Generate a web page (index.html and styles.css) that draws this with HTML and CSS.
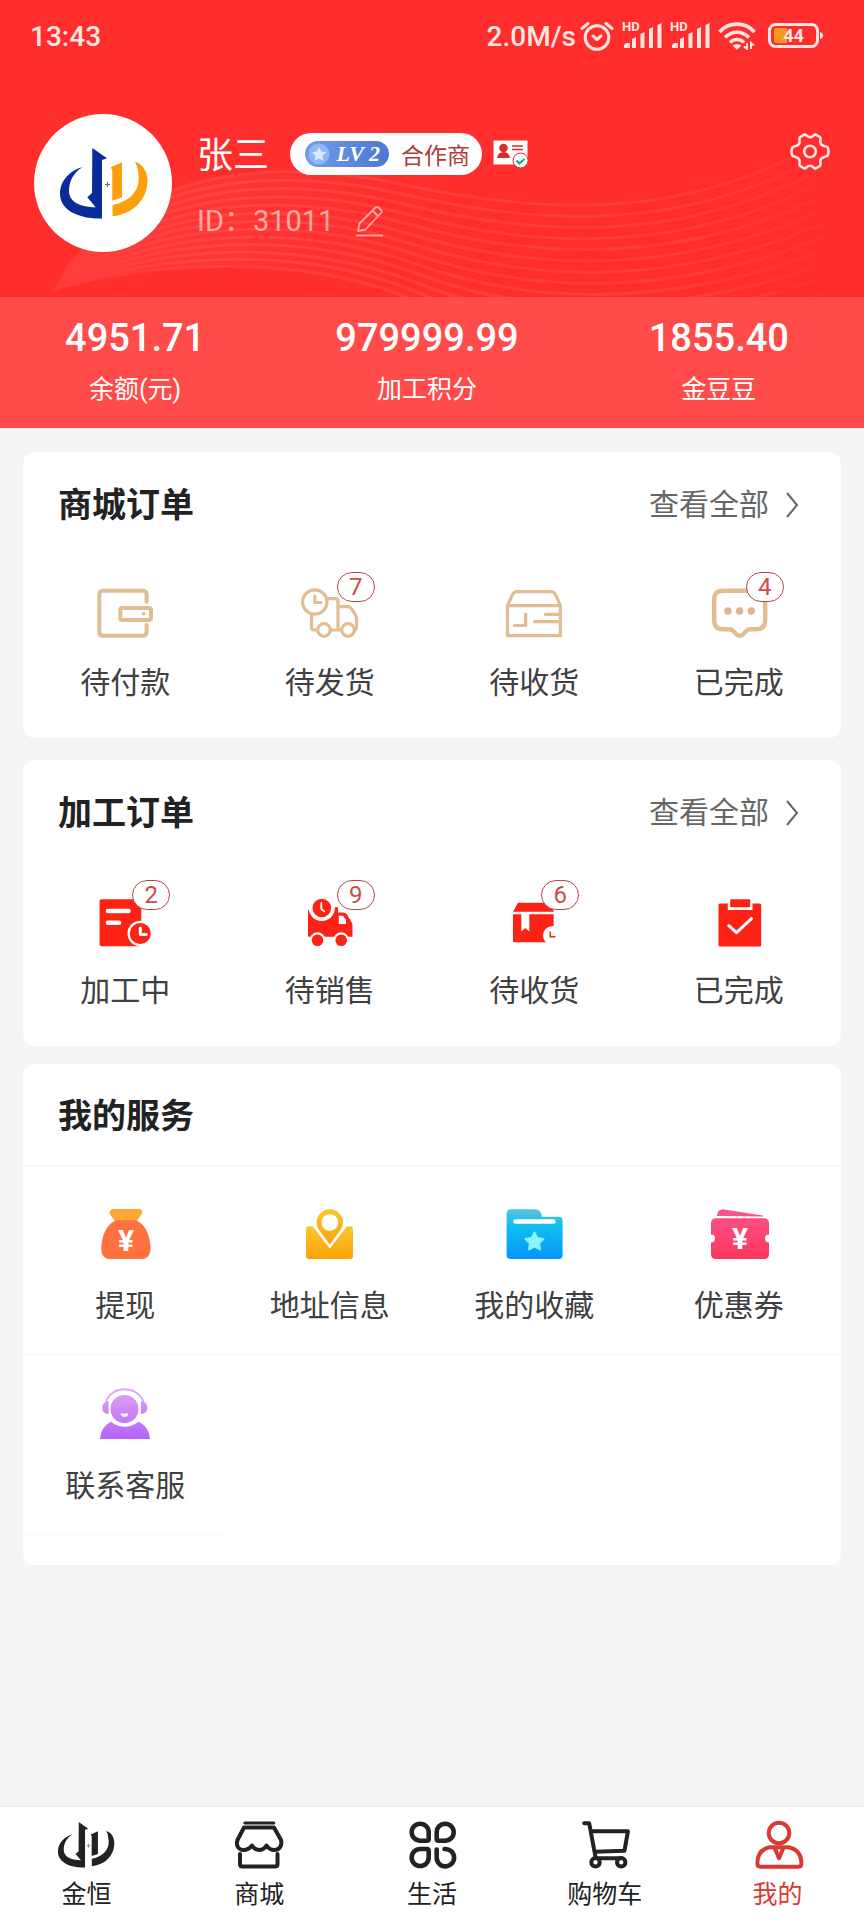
FILE: index.html
```html
<!DOCTYPE html>
<html lang="zh-CN">
<head>
<meta charset="utf-8">
<meta name="viewport" content="width=device-width, initial-scale=1">
<title>我的</title>
<link rel="stylesheet" href="styles.css">
</head>
<body>
<svg class="defs" aria-hidden="true">
  <defs>
    <symbol id="brand" viewBox="22 27 93 77">
      <g class="brand-left"><path d="M57.3 30 72 40.3 67 42V100.5C40 101 25 90 25 76 25 62 36 52 47.3 49.3 38 55 34 64 34 73c0 11 11 16 26.7 16.3L52.3 79.3 57 75Z"/></g>
      <g class="brand-right"><path d="M75.700 49.300 87 44.300V79.300L77.300 82.700V52ZM100 43.700C108 46 112.500 54 112.500 63 112 82 98 96 77.500 98.300V87C92 84 102 76 103.500 64 104 56 103 50 100 43.700Z"/></g>
      <path class="brand-mark" d="M72.500 64v5M70 66.500h5"/>
    </symbol>
    <linearGradient id="gold" x1="0" y1="0" x2="0" y2="1"><stop offset="0" stop-color="#fcc62b"/><stop offset="1" stop-color="#fba30a"/></linearGradient>
    <linearGradient id="blue" x1="0" y1="0" x2="0" y2="1"><stop offset="0" stop-color="#5cc3e0"/><stop offset=".3" stop-color="#12c1ee"/><stop offset="1" stop-color="#0894ff"/></linearGradient>
    <linearGradient id="pink" x1="0" y1="0" x2="0" y2="1"><stop offset="0" stop-color="#fb4f83"/><stop offset="1" stop-color="#fb365d"/></linearGradient>
    <linearGradient id="violet" gradientUnits="userSpaceOnUse" x1="0" y1="0" x2="0" y2="51"><stop offset="0" stop-color="#e3a5f3"/><stop offset="1" stop-color="#b562fa"/></linearGradient>
    <linearGradient id="wave-line" gradientUnits="userSpaceOnUse" x1="60" y1="0" x2="830" y2="0"><stop offset="0" stop-color="#fff" stop-opacity="0"/><stop offset=".2" stop-color="#fff" stop-opacity=".08"/><stop offset=".8" stop-color="#fff" stop-opacity=".07"/><stop offset="1" stop-color="#fff" stop-opacity=".02"/></linearGradient>
    <linearGradient id="wave-glow" gradientUnits="userSpaceOnUse" x1="52" y1="0" x2="400" y2="0"><stop offset="0" stop-color="#fff" stop-opacity=".07"/><stop offset="1" stop-color="#fff" stop-opacity="0"/></linearGradient>
  </defs>
</svg>

<header class="top">
  <svg class="waves" viewBox="0 0 864 297" preserveAspectRatio="none" aria-hidden="true">
    <path d="M52 292C110 180 250 152 400 184S690 220 828 138"/>
    <path d="M52 292C112 187 254 160 402 194S690 230 828 152"/>
    <path d="M52 292C114 194 258 168 404 204S690 240 828 166"/>
    <path d="M52 292C116 201 262 176 406 214S690 250 828 180"/>
    <path d="M52 292C118 208 266 184 408 224S690 260 828 194"/>
    <path d="M52 292C120 215 270 192 410 234S690 270 828 208"/>
    <path d="M52 292C122 222 274 200 412 244S690 280 828 222"/>
    <path d="M52 292C124 229 278 208 414 254S690 290 828 236"/>
    <path d="M52 292C126 236 282 216 416 264S690 300 828 250"/>
    <path d="M52 292C128 243 286 224 418 274S690 310 828 264"/>
    <path d="M52 292C130 250 290 232 420 284S690 320 828 278"/>
    <path d="M52 292C132 257 294 240 422 294S690 330 828 292"/>
    <path d="M52 292C134 264 298 248 424 304"/>
    <path class="wave-fill" d="M52 292C110 180 250 152 400 184L424 300C298 248 134 264 52 292Z"/>
  </svg>

  <div class="status">
    <span>13:43</span>
    <div class="status-right">
      <span>2.0M/s</span>
      <svg width="34" height="30" viewBox="0 0 34 30" fill="none" stroke="currentColor" stroke-width="3" stroke-linecap="round"><circle cx="17" cy="16.500" r="11.800"/><path d="M2 7.500 8 2.500M32 7.500 26 2.500"/><path d="m13 15 4 3.500 4-3.500" stroke-linejoin="round"/></svg>
      <svg class="signal" width="40" height="40" viewBox="0 -6 40 40" fill="currentColor"><text x="0" y="9">HD</text><path d="M2 26v-3l2-2h4v5zM10 26V17l4-2v11zM18.500 26V12l4-2v16zM27 26V7l4-2v21zM35.500 26V3l4-2v25z"/></svg>
      <svg class="signal" width="40" height="40" viewBox="0 -6 40 40" fill="currentColor"><text x="0" y="9">HD</text><path d="M2 26v-3l2-2h4v5zM10 26V17l4-2v11zM18.500 26V12l4-2v16zM27 26V7l4-2v21zM35.500 26V3l4-2v25z"/></svg>
      <svg class="wifi" width="38" height="28" viewBox="0 0 38 28" fill="none" stroke="currentColor" stroke-width="3.600"><path d="M1.500 10C11-.5 27-.5 36.500 10M7 15.500c7-7 17-7 24 0M12 20.500c4-4 10-4 14 0"/><path d="m14.500 23.500 4.500 4.200 4.500-4.200q-4.500-3-9 0Z" fill="currentColor" stroke="none"/><path d="M29 21v6l-3-2.500M33 27v-6l3 2.500" stroke-width="2"/></svg>
      <svg class="battery" width="56" height="26" viewBox="0 0 56 26"><rect x="1.500" y="1.500" width="48" height="22" rx="6" fill="none" stroke="currentColor" stroke-width="3"/><path d="M9 5h10v15H9q-3 0-3-3V8q0-3 3-3Z" fill="#f59b20"/><path d="M52 9q3 1 3 3.500T52 16Z" fill="currentColor"/><text x="25.500" y="19" text-anchor="middle" fill="currentColor">44</text></svg>
    </div>
  </div>

  <div class="profile">
    <div class="avatar"><svg width="93" height="77"><use href="#brand"/></svg></div>
    <div class="info">
      <div class="name-row">
        <h1 class="name">张三</h1>
        <div class="role">
          <span class="level">
            <svg width="24" height="24" viewBox="0 0 24 24"><circle cx="12" cy="12" r="10.500" fill="#8fb6f5"/><path d="m12 5 2.200 4.500 5 .7-3.600 3.500.8 5L12 16.400 7.600 18.700l.8-5L4.800 10.200l5-.7Z" fill="#dbe9ff"/></svg>
            <em>LV 2</em>
          </span>
          <span>合作商</span>
        </div>
        <svg width="36" height="30" viewBox="0 0 36 30"><path d="M.5 1.500h34v24h-34z" fill="#fff"/><circle cx="10.500" cy="9" r="4.300" fill="#d92b2b"/><path d="M4 19q1-6 6.500-6T17 19Z" fill="#d92b2b"/><path d="M19 7h11M19 10.500h11" stroke="#d92b2b" stroke-width="1.500"/><circle cx="27.500" cy="21.500" r="7.500" fill="#fff" stroke="#d92b2b"/><path d="m23.500 21.500 3 3 5-4.500" fill="none" stroke="#23a08c" stroke-width="2"/></svg>
      </div>
      <div class="id-row">
        <span>ID：31011</span>
        <button class="plain" type="button" aria-label="编辑"><svg width="30" height="32" viewBox="0 0 30 32" fill="none" stroke="currentColor" stroke-width="1.800" stroke-linejoin="round"><path d="M2 30.500h27"/><path d="M4 26 5.500 18.500 21.500 2.500q1.500-1 3 0L27 5q1.500 1.500 0 3L11.500 24.500ZM18.500 5.500l6 6"/></svg></button>
      </div>
    </div>
    <button class="plain settings" type="button" aria-label="设置"><svg width="40" height="40" viewBox="0 0 40 40" fill="none" stroke="currentColor" stroke-width="2.600" stroke-linejoin="round"><path d="M14.200 2.700C16 2 16.800 5.200 20 5.200S24 2 25.800 2.700L30 5.200C31.500 6.500 29.300 9.200 31 12S36.500 13.800 37.700 15.500C38.500 17.500 38.500 21.500 37.700 23.500 36.500 25.200 32.700 24.300 31 27S31.500 32.500 30 33.800L25.800 36.300C24 37 23.200 33.800 20 33.800S16 37 14.200 36.300L10 33.800C8.500 32.500 10.700 29.800 9 27S3.500 25.200 2.300 23.500C1.500 21.500 1.500 17.500 2.300 15.500 3.500 13.800 7.300 14.700 9 12S8.500 6.500 10 5.200Z"/><circle cx="20" cy="19.500" r="5.800"/></svg></button>
  </div>

  <div class="stats">
    <a class="stat" href="#balance"><strong>4951.71</strong><span>余额(元)</span></a>
    <a class="stat" href="#points"><strong>979999.99</strong><span>加工积分</span></a>
    <a class="stat" href="#beans"><strong>1855.40</strong><span>金豆豆</span></a>
  </div>
</header>

<main class="content">
  <section class="card">
    <div class="card-head">
      <h2>商城订单</h2>
      <a class="more" href="#shop-orders">查看全部<svg width="14" height="28" viewBox="0 0 14 28" fill="none" stroke="currentColor" stroke-width="2"><path d="m2 2 10 12L2 26"/></svg></a>
    </div>
    <div class="grid orders outline">
      <a class="item" href="#pay">
        <span class="icon"><svg viewBox="0 0 60 52"><path d="M51.600 14.700V7.700q0-4-4-4H8.300q-4 0-4 4v37q0 4 4 4H47.600q4 0 4-4V38"/><rect x="25.300" y="21" width="30.700" height="12" rx="2"/><circle class="dot" cx="48.600" cy="26.800" r="1.800"/></svg></span>
        <span>待付款</span>
      </a>
      <a class="item" href="#ship">
        <span class="icon"><svg class="thin" viewBox="0 0 60 52"><circle cx="14.800" cy="15" r="12.200"/><path d="M14.800 9v6.500H21M28 11.700h7q3 0 3 3V42.500M11.500 28v12q0 3 3 3h3M30.500 43H41.500M38 19.700h10q2 0 3 1.500l4 6q1.500 2 1.500 4V40q0 2-1.500 3"/><circle cx="24" cy="43" r="6.300"/><circle cx="48" cy="43" r="6.300"/></svg><b class="badge">7</b></span>
        <span>待发货</span>
      </a>
      <a class="item" href="#receive">
        <span class="icon"><svg class="thin" viewBox="0 0 60 52"><path d="M3.500 18.700V48.700H56.300V18.700ZM3.500 18.700 8.500 7.700Q10 4.700 13 4.700H47Q50 4.700 51.500 7.700L56.300 18.700M10.600 38.500h11V27M41.300 27.300H56M30.600 34.700H56"/></svg></span>
        <span>待收货</span>
      </a>
      <a class="item" href="#done">
        <span class="icon"><svg class="thick" viewBox="0 0 60 52"><path d="M14.200 3.700H47.200q9 0 9 9V33.300q0 9-9 9H41q-2 0-3.500 1.500l-4 4q-2.800 2-5.500 0l-4-4q-1.500-1.500-3.500-1.500H14.200q-9 0-9-9V12.700q0-9 9-9Z"/><circle class="dot" cx="18.900" cy="24" r="3.700"/><circle class="dot" cx="30.600" cy="24" r="3.700"/><circle class="dot" cx="42.300" cy="24" r="3.700"/></svg><b class="badge">4</b></span>
        <span>已完成</span>
      </a>
    </div>
  </section>

  <section class="card">
    <div class="card-head">
      <h2>加工订单</h2>
      <a class="more" href="#work-orders">查看全部<svg width="14" height="28" viewBox="0 0 14 28" fill="none" stroke="currentColor" stroke-width="2"><path d="m2 2 10 12L2 26"/></svg></a>
    </div>
    <div class="grid orders solid">
      <a class="item" href="#working">
        <span class="icon"><svg viewBox="0 0 60 52"><rect x="4.600" y="4.300" width="41.700" height="47" rx="2"/><path class="cut" d="M13 16H33.500M13 27.700H24" stroke-width="4.500"/><circle class="gap" cx="45.300" cy="38.500" r="12.800"/><circle cx="45.300" cy="38.500" r="10.500"/><path class="cut" d="M45.300 33v6.500h6" stroke-width="3"/></svg><b class="badge">2</b></span>
        <span>加工中</span>
      </a>
      <a class="item" href="#selling">
        <span class="icon"><svg viewBox="0 0 60 52"><path d="M8 15 34 12.300H38V17.500H43Q45.500 17.500 47 19.500L51.500 27Q52.500 29 52.500 31V41.700H8Z"/><circle class="gap" cx="21.800" cy="13" r="13"/><circle cx="21.800" cy="13" r="9.300"/><path class="cut" d="M21.300 8v6l3 2.500" stroke-width="1.800"/><path class="gap" d="M38.800 20.700H43L46 25V29H38.800Z"/><circle class="gap" cx="17.500" cy="45.300" r="8"/><circle cx="17.500" cy="45.300" r="5.800"/><circle class="gap" cx="41.200" cy="45.300" r="8"/><circle cx="41.200" cy="45.300" r="5.800"/></svg><b class="badge">9</b></span>
        <span>待销售</span>
      </a>
      <a class="item" href="#work-receive">
        <span class="icon"><svg viewBox="0 0 60 52"><path d="M14 7.700H46L50 16.700H9ZM9 19.300H49.600V47.300H10Q9 47.300 9 46Z"/><path class="gap" d="M17.300 18H25.300V36.500L21.300 33 17.300 36.500Z"/><circle class="gap" cx="48.500" cy="40.500" r="9.500"/><path d="M45.500 36.500h1.500V41h4.500v1.500h-6Z"/></svg><b class="badge">6</b></span>
        <span>待收货</span>
      </a>
      <a class="item" href="#work-done">
        <span class="icon"><svg viewBox="0 0 60 52"><rect x="9.500" y="8.500" width="42.700" height="43" rx="1.500"/><path class="gap" d="M18.800 8H43.500V15H18.800Z"/><rect x="21.200" y="4.300" width="20" height="8" rx="1"/><path class="cut" d="m19.800 30.700 7.700 7 15-14" stroke-width="3"/></svg></span>
        <span>已完成</span>
      </a>
    </div>
  </section>

  <section class="card services-card">
    <div class="card-head"><h2>我的服务</h2></div>
    <div class="grid services">
      <a class="item" href="#withdraw">
        <span class="icon"><svg viewBox="0 0 60 52"><path d="M17 1H45Q49 3 46 7L42 13H20L15.500 7Q13 3 17 1Z" fill="#ffa735"/><path d="M22 12.300H40C50 15 55.500 28 55.500 41 55.500 47 52 51 47 51H14.500C9.500 51 6.300 47 6.300 41 6.300 28 12 15 22 12.300Z" fill="#ff7240"/><text x="31" y="43">¥</text></svg></span>
        <span>提现</span>
      </a>
      <a class="item" href="#address">
        <span class="icon"><svg viewBox="0 0 60 52" fill="url(#gold)"><path d="M9 18.300H12.500L29.800 40.500 47 18.300H50Q53 18.300 53 21.300V48Q53 51 50 51H9Q6 51 6 48V21.300Q6 18.300 9 18.300Z"/><path fill-rule="evenodd" d="M29.800 1.300A13.200 13.200 0 0 1 43 14.500Q43 18 40.500 22L29.800 36.500 19 22Q16.600 18 16.600 14.500A13.200 13.200 0 0 1 29.800 1.300ZM29.800 6.200a8.300 8.300 0 1 0 .01 0Z"/></svg></span>
        <span>地址信息</span>
      </a>
      <a class="item" href="#favorites">
        <span class="icon"><svg viewBox="0 0 60 52"><path d="M7 1.300H31Q37 1.300 38 8.700H54.600Q58.600 8.700 58.600 12.700V47Q58.600 51 54.600 51H6.600Q2.600 51 2.600 47V6Q2.600 1.300 7 1.300Z" fill="url(#blue)"/><rect x="9.300" y="11.300" width="42.300" height="4.400" rx="2" fill="#fff"/><path d="m30.500 24.500 2.800 5.600 6.100.9-4.400 4.300 1 6.100-5.500-2.900-5.500 2.900 1-6.100-4.400-4.300 6.100-.9Z" fill="#8af3ff" stroke="#8af3ff" stroke-width="2" stroke-linejoin="round"/></svg></span>
        <span>我的收藏</span>
      </a>
      <a class="item" href="#coupons">
        <span class="icon"><svg viewBox="0 0 60 52"><path d="M8 8Q8 2 13.500 1.300L54 7.500 54 8.500Z" fill="#f9548a"/><path d="M7 10.300H55Q60 10.300 60 15.300V26.500A4 4 0 0 0 60 34.500V46Q60 51 55 51H7Q2 51 2 46V34.500A4 4 0 0 0 2 26.500V15.300Q2 10.300 7 10.300Z" fill="url(#pink)"/><text x="31" y="41">¥</text></svg></span>
        <span>优惠券</span>
      </a>
      <a class="item" href="#service">
        <span class="icon"><svg viewBox="0 0 60 52" fill="url(#violet)"><circle cx="29.500" cy="21" r="14"/><path d="M11 14C16 -3 43 -3 48.500 14" fill="none" stroke="#dda8ee" stroke-width="1.800"/><path d="M13.600 13V26Q7 26 7.300 19.500 7.500 14 13.600 13ZM46 13V26Q52.300 26 52.300 19.500 52 14 46 13Z"/><path d="M16 33.700Q29.500 44 43.500 33.700 54 38 55 51H5Q6 38 16 33.700Z"/><path d="M25.500 25.500h8q-1 3.500-4 3.500t-4-3.500Z" fill="#fff"/></svg></span>
        <span>联系客服</span>
      </a>
    </div>
  </section>
</main>

<nav class="tabs">
  <a class="tab" href="#home"><svg width="60" height="50"><use href="#brand"/></svg><span>金恒</span></a>
  <a class="tab" href="#shop"><svg width="60" height="50" viewBox="0 0 60 50"><path d="M15.800 3H44.800" stroke-width="3"/><path d="M15 7.500H45L52 20C53.500 26 50 30 45.500 30 42 30 39 28 37.500 25.500 36 28 33 30 30 30S24.500 28 23 25.500C21 28 18 30 14.500 30 10 30 6.500 26 8.500 20Z"/><path d="M11 34v10q0 2.500 2.500 2.500h32.500q2.500 0 2.500-2.500V34"/></svg><span>商城</span></a>
  <a class="tab" href="#life"><svg class="bold" width="60" height="50" viewBox="0 0 60 50"><path d="M26.700 12.200A8.500 8.500 0 1 0 18.200 20.700H24.700q2 0 2-2ZM34.700 12.200A8.500 8.500 0 1 1 43.200 20.700H36.700q-2 0-2-2ZM26.700 37.500A8.500 8.500 0 1 1 18.200 29H24.700q2 0 2 2ZM34.700 29.500V37.500A8.700 8.700 0 1 0 42.500 29"/></svg><span>生活</span></a>
  <a class="tab" href="#cart"><svg width="60" height="50" viewBox="0 0 60 50"><path d="M9.200 3.300H14.200L20.500 37M17.200 11.300H52.900L49.500 30.700 20 31.700M22 38.300H46"/><circle cx="20.500" cy="42.300" r="4.200"/><circle cx="46.200" cy="42.300" r="4.200"/></svg><span>购物车</span></a>
  <a class="tab active" href="#me" aria-current="page"><svg width="60" height="50" viewBox="0 0 60 50"><circle cx="31" cy="13" r="10.300"/><path d="M21.500 27.300H40.500Q53.400 30 53.400 43.500 53.400 46.700 50.500 46.700H12.500Q9.400 46.700 9.400 43.500 9.400 30 21.500 27.300ZM26.700 28 31 38.300 35.400 28"/></svg><span>我的</span></a>
</nav>
</body>
</html>
```

FILE: styles.css
```css
* {
  box-sizing: border-box;
}

body {
  margin: 0;
  min-height: 100vh;
  display: flex;
  flex-direction: column;
  background: #f5f5f5;
  color: #404040;
  font-family: Roboto, "Noto Sans CJK SC", sans-serif;
}

a {
  color: inherit;
  text-decoration: none;
}

svg {
  display: block;
  flex: none;
}

h1,
h2 {
  margin: 0;
}

.defs {
  position: absolute;
  width: 0;
  height: 0;
}

.plain {
  padding: 0;
  border: 0;
  background: none;
  color: inherit;
}

/* Header */
.top {
  position: relative;
  background: #ff2d2c;
  color: #fff;
}

.waves {
  position: absolute;
  top: 0;
  left: 0;
  width: 100%;
  height: 297px;
  fill: none;
  stroke: url(#wave-line);
  stroke-width: 3;
}

.wave-fill {
  fill: url(#wave-glow);
  stroke: none;
}

.status,
.profile,
.stats {
  position: relative;
}

.status {
  display: flex;
  justify-content: space-between;
  align-items: center;
  height: 72px;
  padding: 0 40px 0 30px;
  color: #ffe6e2;
  font-size: 28px;
  font-weight: 500;
}

.status-right {
  display: flex;
  align-items: center;
  gap: 8px;
}

.status-right > span {
  margin-right: -4px;
}

.signal text {
  font-size: 13px;
  font-weight: 700;
}

.battery {
  margin-left: 4px;
}

.battery text {
  font-size: 18px;
  font-weight: 700;
}

.profile {
  display: flex;
  align-items: flex-start;
  height: 225px;
  padding: 42px 34px 0;
}

.avatar {
  --brand-accent: #fd9f0b;
  display: flex;
  align-items: center;
  justify-content: center;
  width: 138px;
  height: 138px;
  border-radius: 50%;
  background: #fff;
  color: #0a2c9b;
}

.brand-left {
  fill: currentColor;
}

.brand-right {
  fill: var(--brand-accent, currentColor);
}

.brand-mark {
  fill: none;
  stroke: #8b5a44;
  stroke-width: 1;
}

.info {
  flex: 1;
  padding: 19px 0 0 25px;
}

.name-row {
  display: flex;
  align-items: center;
  height: 42px;
}

.name {
  padding-top: 4px;
  font-size: 36px;
  font-weight: 400;
  line-height: 42px;
}

.role {
  display: flex;
  align-items: center;
  gap: 12px;
  height: 42px;
  margin: 0 11px 0 21px;
  padding: 0 12px 0 15px;
  border-radius: 21px;
  background: #fff;
  color: #b23a35;
  font-size: 23px;
}

.level {
  display: flex;
  align-items: center;
  justify-content: space-between;
  width: 84px;
  height: 26px;
  padding: 0 9px 0 2px;
  border-radius: 13px;
  background: linear-gradient(90deg, #6f9de8, #4c78d2);
  color: #fff;
  font: 700 22px/26px "Liberation Serif", serif;
}

.id-row {
  display: flex;
  align-items: center;
  gap: 20px;
  margin-top: 28px;
  color: #ffa9a5;
  font-size: 29px;
  line-height: 36px;
}

.settings {
  margin-top: 18px;
  color: #ffe6e2;
}

.stats {
  display: flex;
  justify-content: space-around;
  padding: 17px 10px 20px 0;
  background: #ff4c4b;
}

.stat {
  display: flex;
  flex-direction: column;
  align-items: center;
  gap: 9px;
}

.stat strong {
  font-size: 38px;
  font-weight: 500;
  line-height: 48px;
}

.stat span {
  font-size: 25px;
  line-height: 37px;
}

/* Cards */
.content {
  flex: 1;
  padding: 24px 23px;
}

.card {
  margin-bottom: 22px;
  border-radius: 12px;
  background: #fff;
}

.card-head {
  display: flex;
  align-items: center;
  justify-content: space-between;
  height: 102px;
  padding: 3px 42px 0 35px;
}

.card-head h2 {
  color: #222;
  font-size: 34px;
  font-weight: 700;
  line-height: 48px;
}

.more {
  display: flex;
  align-items: center;
  gap: 16px;
  color: #666;
  font-size: 30px;
  line-height: 40px;
}

.grid {
  display: grid;
  grid-template-columns: repeat(4, 1fr);
}

.item {
  display: flex;
  flex-direction: column;
  align-items: center;
  gap: 24px;
  padding: 33px 0 35px;
  font-size: 30px;
  line-height: 40px;
}

.icon {
  position: relative;
  width: 60px;
  height: 52px;
}

.icon svg {
  width: 60px;
  height: 52px;
}

.badge {
  position: absolute;
  top: -15px;
  left: 37px;
  width: 38px;
  height: 30px;
  border: 1px solid #b8484c;
  border-radius: 15px;
  background: #fff;
  color: #cf4a48;
  font-size: 24px;
  font-weight: 400;
  line-height: 28px;
  text-align: center;
}

.outline svg {
  fill: none;
  stroke: #e2bd94;
  stroke-width: 4;
  stroke-linejoin: round;
  stroke-linecap: round;
}

.outline .thin {
  stroke-width: 3.2;
}

.outline .thick {
  stroke-width: 4.4;
}

.outline .dot {
  fill: #dcb78e;
  stroke: none;
}

.solid svg {
  fill: #fd2213;
}

.solid .gap {
  fill: #fff;
}

.solid .cut {
  fill: none;
  stroke: #fff;
  stroke-linecap: round;
  stroke-linejoin: round;
}

.card:nth-child(2) {
  margin-bottom: 18px;
}

.services-card {
  margin-bottom: 0;
  padding-bottom: 30px;
}

.services-card .card-head {
  border-bottom: 1px solid #f3f3f3;
}

.services {
  padding-top: 9px;
}

.services .item {
  gap: 26px;
  padding-bottom: 28px;
  border-bottom: 1px solid #f6f6f6;
}

.services text {
  fill: #fff;
  font-size: 30px;
  font-weight: 700;
  text-anchor: middle;
}

/* Bottom navigation */
.tabs {
  position: sticky;
  bottom: 0;
  display: grid;
  grid-template-columns: repeat(5, 1fr);
  padding: 13px 0 9px;
  border-top: 1px solid #ececec;
  background: #fff;
  color: #222;
}

.tab {
  display: flex;
  flex-direction: column;
  align-items: center;
  gap: 9px;
  font-size: 25px;
  line-height: 32px;
}

.tab svg {
  fill: none;
  stroke: currentColor;
  stroke-width: 4;
  stroke-linecap: round;
  stroke-linejoin: round;
}

.tab:first-child svg {
  stroke: none;
}

.tab .bold {
  stroke-width: 4.6;
}

.active {
  color: #d93a32;
}
```
